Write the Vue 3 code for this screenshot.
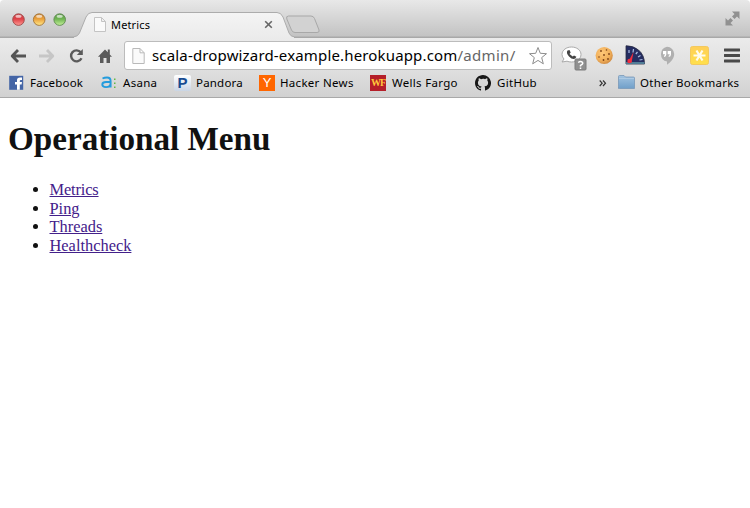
<script setup>
const links = ['Metrics', 'Ping', 'Threads', 'Healthcheck']
</script>

<template>
  <div class="window">
    <header class="titlebar">
      <svg class="lights" width="62" height="16" viewBox="0 0 62 16">
        <defs>
          <linearGradient id="red" x2="0" y2="1"><stop stop-color="#c94246" /><stop offset=".45" stop-color="#df4248" /><stop offset="1" stop-color="#ff9a94" /></linearGradient>
          <linearGradient id="amber" x2="0" y2="1"><stop stop-color="#c98335" /><stop offset=".45" stop-color="#eba13b" /><stop offset="1" stop-color="#ffe98a" /></linearGradient>
          <linearGradient id="green" x2="0" y2="1"><stop stop-color="#5b9a48" /><stop offset=".45" stop-color="#70b553" /><stop offset="1" stop-color="#c4f09a" /></linearGradient>
        </defs>
        <circle cx="10.5" cy="7.6" r="5.8" fill="url(#red)" stroke="#9b4847" stroke-width=".9" />
        <circle cx="31.2" cy="7.6" r="5.8" fill="url(#amber)" stroke="#a27336" stroke-width=".9" />
        <circle cx="51.7" cy="7.6" r="5.8" fill="url(#green)" stroke="#5d8851" stroke-width=".9" />
        <g fill="#fff" opacity=".65"><ellipse cx="10.5" cy="4.3" rx="3" ry="1.5" /><ellipse cx="31.2" cy="4.3" rx="3" ry="1.5" /><ellipse cx="51.7" cy="4.3" rx="3" ry="1.5" /></g>
      </svg>
      <div class="tab">
        <svg class="tab-shape" width="220" height="27" viewBox="0 0 220 27">
          <defs><linearGradient id="tabfill" x2="0" y2="1"><stop stop-color="#f4f4f4" /><stop offset="1" stop-color="#ebebeb" /></linearGradient></defs>
          <path d="M0 27V26Q4 25.5 5.5 22L12 6Q14 1.500 18 1.500H203Q207 1.500 209 6L215 22Q216.500 25.500 220 26V27Z" fill="url(#tabfill)" />
          <path d="M0 25.800Q4 25.500 5.500 22L12 6Q14 1.500 18 1.500H203Q207 1.500 209 6L215 22Q216.500 25.500 220 25.800" fill="none" stroke="#acacac" />
        </svg>
        <div class="tab-content">
          <svg class="page-icon" width="12" height="15" viewBox="0 0 12 15"><path d="M.5.5H7.500L11.500 4.500V14.500H.5ZM7.500.5V4.500H11.500" fill="#fafafa" stroke="#c4c4c4" /></svg>
          <span class="tab-title">Metrics</span>
          <svg width="9" height="9" viewBox="0 0 9 9"><path d="M1.200 1.200L7.800 7.800M7.800 1.200L1.200 7.800" stroke="#666" stroke-width="1.600" /></svg>
        </div>
      </div>
      <svg class="new-tab" width="36" height="19" viewBox="0 0 36 19"><path d="M3.500 1H26Q28.500 1 29.500 3.500L34 15Q34.800 17.500 32 17.500H10Q7.500 17.500 6.500 15L1.800 4Q.8 1 3.500 1Z" fill="#d2d2d2" stroke="#a8a8a8" /></svg>
      <svg class="expand" width="15" height="15" viewBox="0 0 15 15"><path d="M7 .5H14.500V8L12 5.600 9.500 8 7 5.500 9.500 3ZM.5 7L3 9.500 5.500 7 8 9.500 5.500 12 8 14.500H.5Z" fill="#919191" /></svg>
    </header>

    <section class="toolbar">
      <nav class="nav">
        <svg width="17" height="16" viewBox="0 0 17 16"><path d="M8 2L2.200 8 8 14M2.500 8H16" fill="none" stroke="#555" stroke-width="2.800" stroke-linejoin="round" /></svg>
        <svg width="17" height="16" viewBox="0 0 17 16"><path d="M9 2L14.800 8 9 14M14.500 8H1" fill="none" stroke="#c6c6c6" stroke-width="2.800" stroke-linejoin="round" /></svg>
        <svg width="16" height="16" viewBox="0 0 16 16"><path d="M11.800 4.300A5.500 5.500 0 1 0 12.500 10.300" fill="none" stroke="#5b5b5b" stroke-width="2.400" /><path d="M13.800 1V7H7.800Z" fill="#5b5b5b" /></svg>
        <svg width="14" height="16" viewBox="0 0 14 16"><path d="M7 1.500L9.800 4.300V1.500H11.800V6.400L14 8.700H12V15H8.500V10H5.500V15H2V8.700H0Z" fill="#5b5b5b" /></svg>
      </nav>
      <div class="address">
        <svg class="page-icon" width="13" height="16" viewBox="0 0 13 16"><path d="M.8.5H8L12.200 4.800V15.500H.8ZM8 .5V4.800H12.200" fill="#fafafa" stroke="#b9b9b9" /></svg>
        <span class="url"><span class="host">scala-dropwizard-example.herokuapp.com</span><span class="path">/admin/</span></span>
        <svg class="star" width="20" height="20" viewBox="0 0 20 20"><path d="M10 1.500L12.300 7.300 18.500 7.700 13.700 11.600 15.300 17.800 10 14.400 4.700 17.800 6.300 11.600 1.500 7.700 7.700 7.300Z" fill="#fff" stroke="#8d8d8d" stroke-linejoin="round" /></svg>
      </div>
      <div class="extensions">
        <svg width="26" height="25" viewBox="0 0 26 25">
          <path d="M10.500 1C15.500 1 20 4 20 8.500S15.500 16 10.500 16Q8 16 6 15.200L1 16 3 13Q1 11 1 8.500C1 4 5.500 1 10.500 1Z" fill="#fff" stroke="#aaa" />
          <path d="M6.500 4.500L8.500 4 9.700 6.500 8.500 8 11.700 10.500 13 9.400 15.400 10.800 14.300 12.600Q11.500 14 8 10.500 4.800 7 6.500 4.500Z" fill="#444" />
          <rect x="14" y="13" width="11" height="11" rx="1" fill="#909090" stroke="#7d7d7d" />
          <path d="M17.200 16.500Q19.500 14.800 21.500 16.300 22.500 18 19.500 19.400V20.500M19.500 21.500V23" fill="none" stroke="#fff" stroke-width="1.500" />
        </svg>
        <svg width="19" height="19" viewBox="0 0 19 19">
          <defs><radialGradient id="cookie" cx=".4" cy=".35" r=".7"><stop stop-color="#ffc878" /><stop offset=".65" stop-color="#f0ae59" /><stop offset="1" stop-color="#cc8740" /></radialGradient></defs>
          <circle cx="9.200" cy="9.500" r="8.600" fill="url(#cookie)" />
          <g fill="#7c4217"><circle cx="6" cy="5" r=".9" /><circle cx="11.500" cy="4" r=".8" /><circle cx="14" cy="8" r=".9" /><circle cx="9" cy="9" r=".9" /><circle cx="4" cy="11" r=".8" /><circle cx="8.500" cy="14" r=".9" /><circle cx="13" cy="13" r=".9" /></g>
        </svg>
        <svg width="20" height="20" viewBox="0 0 20 20">
          <path d="M1 .8Q8 .5 13.500 5Q19.500 10 19.500 19H1Z" fill="#252d62" stroke="#292c42" stroke-width=".8" />
          <path d="M1 17H19.500V19H1Z" fill="#507d96" /><path d="M4 5V8M8.500 4L8 7.500M12.500 7L10.800 9M15.500 10.500L13 12M17.500 14.500L14.500 15" stroke="#adbde3" stroke-width="1.200" />
          <path d="M2.500 18L8.500 7 6.500 17.500Z" fill="#f02c3e" /><circle cx="4.500" cy="16" r="2.200" fill="#f02c3e" />
        </svg>
        <svg width="16" height="20" viewBox="0 0 16 20"><path d="M8 .8A7.200 7.200 0 0 1 15.200 8C15.200 12.500 11.500 16.500 8 18.800V15.500A7.500 7.500 0 0 1 8 .8Z" fill="#b0b0b0" /><path d="M4 5H7.300V8.500Q7.300 10.800 5 11V9.700Q6 9.500 6 8.300H4ZM8.700 5H12V8.500Q12 10.800 9.700 11V9.700Q10.700 9.500 10.700 8.300H8.700Z" fill="#fff" /></svg>
        <svg width="19" height="19" viewBox="0 0 19 19"><defs><linearGradient id="yellow" x2="0" y2="1"><stop stop-color="#ffcf58" /><stop offset="1" stop-color="#ffe04c" /></linearGradient></defs><rect x=".5" y=".5" width="18" height="18" rx="2" fill="url(#yellow)" stroke="#f3c95e" /><path d="M3.500 9.500H15.500M6.500 4.500L12.500 14.500M12.500 4.500L6.500 14.500" stroke="#fffbed" stroke-width="2.200" /></svg>
        <svg width="16" height="15" viewBox="0 0 16 15"><path d="M.5 2H15.500M.5 7.500H15.500M.5 13H15.500" stroke="#494949" stroke-width="2.800" stroke-linecap="round" /></svg>
      </div>
    </section>

    <nav class="bookmarks">
      <div class="bookmark">
        <svg width="16" height="16" viewBox="0 0 16 16"><rect x=".2" y=".8" width="14" height="14" fill="#4465a6" /><path d="M8 14.800V9.500H6V7H8V5Q8 2.500 11 2.500H13V5H11.700Q10.800 5 10.800 6V7H13L12.600 9.500H10.800V14.800Z" fill="#fff" /></svg>
        <span class="label facebook">Facebook</span>
      </div>
      <div class="bookmark">
        <svg width="17" height="16" viewBox="0 0 17 16"><path d="M1.500 3.500Q3.500 2.500 6 2.500Q9.600 2.500 9.600 6V12.500M9.500 7H5Q1.300 7 1.300 9.500T5 12.100Q9.500 12.100 9.500 8.500" fill="none" stroke="#249cdd" stroke-width="1.900" /><path d="M13 3.500H14.500V5H13ZM13 7.500H14.500V9H13ZM13 11.500H14.500V13H13Z" fill="#62b946" /></svg>
        <span class="label asana">Asana</span>
      </div>
      <div class="bookmark">
        <span class="pandora-icon">P</span>
        <span class="label pandora">Pandora</span>
      </div>
      <div class="bookmark">
        <span class="hn-icon">Y</span>
        <span class="label hacker">Hacker News</span>
      </div>
      <div class="bookmark">
        <span class="wf-icon">WF</span>
        <span class="label wells">Wells Fargo</span>
      </div>
      <div class="bookmark">
        <svg width="16" height="16" viewBox="0 0 16 16"><path fill="#171717" d="M8 0C3.580 0 0 3.580 0 8c0 3.540 2.290 6.530 5.470 7.590.4.070.55-.17.55-.38v-1.490c-2.010.37-2.530-.49-2.690-.94-.09-.23-.48-.94-.82-1.130-.28-.15-.68-.52-.01-.53.63-.01 1.080.58 1.230.82.72 1.210 1.870.87 2.330.66.07-.52.28-.87.51-1.070-1.780-.2-3.640-.89-3.640-3.950 0-.87.31-1.590.82-2.150-.08-.2-.36-1.020.08-2.120 0 0 .67-.21 2.200.82A7.600 7.600 0 0 1 8 3.860c.68 0 1.360.09 2 .27 1.530-1.040 2.200-.82 2.200-.82.44 1.100.16 1.920.08 2.120.51.56.82 1.270.82 2.150 0 3.070-1.870 3.750-3.650 3.950.29.25.54.73.54 1.480v2.200c0 .21.15.46.55.38A8 8 0 0 0 8 0Z" /></svg>
        <span class="label github">GitHub</span>
      </div>
      <svg class="more" width="8" height="9" viewBox="0 0 8 9"><path d="M.7 1.500L3.200 4.200.7 7M4 1.500L6.500 4.200 4 7" fill="none" stroke="#333" stroke-width="1.200" /></svg>
      <div class="bookmark">
        <svg width="18" height="16" viewBox="0 0 18 16"><defs><linearGradient id="folder" x2="0" y2="1"><stop stop-color="#a3c4e1" /><stop offset="1" stop-color="#709fc9" /></linearGradient></defs><path d="M.5 13.500V1.500Q.5.5 1.500.5H6L7.500 2H15.500Q16.500 2 16.500 3V13.500H1.500Q.5 13.500.5 12.500Z" fill="url(#folder)" stroke="#7898b8" stroke-width=".8" /><path d="M1 3.500H16" stroke="#b8d1e6" stroke-width=".7" /></svg>
        <span class="label other">Other Bookmarks</span>
      </div>
    </nav>

    <main class="content">
      <h1>Operational Menu</h1>
      <ul>
        <li v-for="link in links" :key="link"><a href="#">{{ link }}</a></li>
      </ul>
    </main>
  </div>
</template>

<style>
body { margin: 0; background: #fff; }
</style>

<style scoped>
.window { width: 750px; height: 508px; overflow: hidden; background: #fff; color: #111; font-family: "Noto Sans", "Open Sans", sans-serif; }
svg { display: block; flex: none; }
.titlebar { display: flex; align-items: flex-start; height: 38px; box-sizing: border-box; border-radius: 4px 4px 0 0; background: linear-gradient(#e8e8e8, #c3c3c3 36px, #a8a8a8 37px, #a8a8a8 38px); }
.lights { margin: 12px 0 0 8px; }
.tab { display: grid; width: 220px; height: 27px; margin: 11px 0 0 4px; }
.tab-shape, .tab-content { grid-area: 1 / 1; }
.tab-content { display: flex; align-items: center; padding: 0 21px 0 20px; z-index: 1; }
.tab-title { flex: 1; margin-left: 5px; font-size: 11px; line-height: 16px; letter-spacing: .15px; color: #000; }
.new-tab { margin: 15px 0 0 -9px; }
.expand { margin: 11px 10px 0 auto; }
.toolbar { display: flex; align-items: flex-start; height: 34px; background: linear-gradient(#ebebeb, #dedede); }
.nav { display: grid; grid-template-columns: 28px 31px 29px 14px; width: 124px; height: 35px; align-items: center; padding-left: 10px; box-sizing: border-box; }
.address { display: flex; align-items: center; width: 428px; height: 29px; margin-top: 3px; padding: 0 3px 0 7px; box-sizing: border-box; border: 1px solid #bcbcbc; border-radius: 3px; background: #fff; }
.url { flex: 1; margin-left: 7px; margin-top: -1px; font-size: 15px; line-height: 22px; white-space: nowrap; color: #000; }
.host { letter-spacing: .16px; }
.path { color: #666; letter-spacing: .3px; }
.extensions { display: grid; grid-template-columns: 34px 30px 34px 31px 34px 16px; align-items: start; margin-left: 9px; padding-top: 8px; }
.extensions svg:nth-child(3) { margin-top: -1px; }
.extensions svg:last-child { margin-top: 2px; }
.bookmarks { display: grid; grid-template-columns: 92px 73px 85px 111px 105px 124px 19px 123px; align-items: center; height: 26px; box-sizing: border-box; padding: 0 0 3px 9px; border-bottom: 1px solid #a9a9a9; background: linear-gradient(#dedede, #d1d1d1); }
.bookmark { display: flex; align-items: center; gap: 5px; white-space: nowrap; }
.label { font-size: 11.500px; line-height: 18px; letter-spacing: .3px; color: #000; }
.facebook, .pandora { letter-spacing: .2px; }
.wells { margin-left: 1px; }
.github { margin-left: 1px; }
.other { margin-left: -1px; letter-spacing: .25px; }
.pandora-icon, .hn-icon, .wf-icon { display: flex; align-items: center; justify-content: center; width: 16px; height: 16px; flex: none; box-sizing: border-box; }
.pandora-icon { width: 17px; border-radius: 2px; background: linear-gradient(#fff, #c9d5e5); color: #174b91; font: bold 15px/16px "Liberation Sans", sans-serif; }
.hn-icon { background: #ff6600; color: #fff; font: 13px/16px "Liberation Sans", sans-serif; }
.wf-icon { background: #b51f29; color: #ffc83b; font: bold 10px/16px "Liberation Serif", serif; letter-spacing: -1px; }
.content { padding: 0 8px; font-family: "Liberation Serif", serif; }
h1 { margin: 21px 0 23px; font-size: 33.200px; line-height: 39px; font-weight: bold; letter-spacing: -.02px; }
ul { margin: 0; padding-left: 41.500px; font-size: 16.400px; line-height: 18.600px; }
li:first-child { letter-spacing: -.15px; }
a { color: #43208a; text-decoration-thickness: 1px; text-underline-offset: 1px; }
</style>
